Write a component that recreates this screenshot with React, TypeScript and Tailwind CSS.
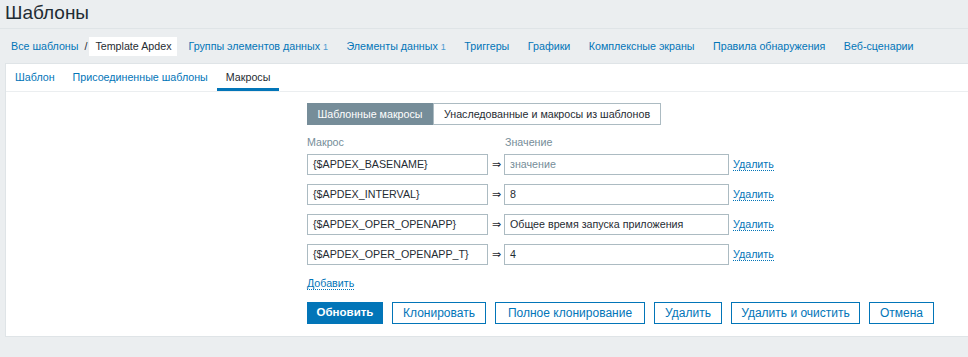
import React from 'react';

const navItems: { label: string; count?: number }[] = [
  { label: 'Группы элементов данных', count: 1 },
  { label: 'Элементы данных', count: 1 },
  { label: 'Триггеры' },
  { label: 'Графики' },
  { label: 'Комплексные экраны' },
  { label: 'Правила обнаружения' },
  { label: 'Веб-сценарии' },
];

const macros = [
  { name: '{$APDEX_BASENAME}', value: '', placeholder: 'значение' },
  { name: '{$APDEX_INTERVAL}', value: '8' },
  { name: '{$APDEX_OPER_OPENAPP}', value: 'Общее время запуска приложения' },
  { name: '{$APDEX_OPER_OPENAPP_T}', value: '4' },
];

const actions = [
  { label: 'Клонировать', w: 'w-[94px]' },
  { label: 'Полное клонирование', w: 'w-[150px]' },
  { label: 'Удалить', w: 'w-[68px]' },
  { label: 'Удалить и очистить', w: 'w-[129px]' },
  { label: 'Отмена', w: 'w-[65px]' },
];

export default function App() {
  return (
    <div className="min-h-[357px] bg-[#ebeef0] text-[10.7px] text-[#1f2c33] whitespace-nowrap font-['Liberation_Sans',Arial,sans-serif]">
      {/* Header */}
      <div className="h-[29px] border-b border-[#dfe4e7] px-[5px]">
        <h1 className="text-[19px] leading-[24px] pt-[1px] font-normal">Шаблоны</h1>
      </div>

      {/* Object navigation */}
      <div className="h-[34px] flex items-center pl-[11px] text-[#0275b8]">
        <span>Все шаблоны</span>
        <span className="ml-[6px] text-[#1f2c33]">/</span>
        <span className="ml-[2px] bg-white px-[6px] h-[19px] leading-[19px] text-[#1f2c33]">Template Apdex</span>
        <div className="flex ml-[11px] gap-[18.5px]">
          {navItems.map((item) => (
            <span key={item.label}>
              {item.label}
              {item.count !== undefined && (
                <span className="ml-[3px] text-[9px] text-[#4a9ad0]">{item.count}</span>
              )}
            </span>
          ))}
        </div>
      </div>

      {/* Panel */}
      <div className="ml-[5px] h-[274px] bg-white border-l border-b border-t border-[#dfe4e7]">
        {/* Tabs */}
        <div className="flex h-[28px] border-b border-[#ebeef0]">
          {['Шаблон', 'Присоединенные шаблоны', 'Макросы'].map((tab, i) => (
            <div
              key={tab}
              className={
                'px-[9px] h-[27px] leading-[26px] ' +
                (i === 2 ? 'text-[#1f2c33] border-b-[3px] border-[#0275b8]' : 'text-[#0275b8]')
              }
            >
              {tab}
            </div>
          ))}
        </div>

        <div className="pl-[301px] pt-[11px]">
          {/* Segmented */}
          <div className="flex h-[22px]">
            <div className="w-[126px] bg-[#768d99] text-white flex items-center justify-center">
              Шаблонные макросы
            </div>
            <div className="w-[228px] border border-[#acbbc2] flex items-center justify-center">
              Унаследованные и макросы из шаблонов
            </div>
          </div>

          {/* Table header */}
          <div className="flex mt-[9px] h-[16px] items-center text-[#768d99]">
            <span className="w-[198px]">Макрос</span>
            <span>Значение</span>
          </div>

          {/* Rows */}
          <div className="flex flex-col gap-[9px] mt-[4px]">
            {macros.map((m) => (
              <div key={m.name} className="flex items-center h-[21px]">
                <div className="w-[181px] h-[21px] border border-[#acbbc2] px-[5px] leading-[19px]">{m.name}</div>
                <span className="w-[16px] text-center text-[11px]">⇒</span>
                <div className={'w-[225px] h-[21px] border border-[#acbbc2] px-[5px] leading-[19px] ' + (m.value ? '' : 'text-[#768d99]')}>
                  {m.value || m.placeholder}
                </div>
                <span className="ml-[4px] text-[#0275b8] border-b border-dotted border-[#0275b8] leading-[12px]">Удалить</span>
              </div>
            ))}
          </div>

          <div className="mt-[10px] h-[14px]">
            <span className="text-[#0275b8] border-b border-dotted border-[#0275b8] leading-[12px] inline-block">Добавить</span>
          </div>

          {/* Buttons */}
          <div className="flex gap-[9px] mt-[13px]">
            <button className="w-[76px] h-[22px] bg-[#0275b8] text-white border border-[#0275b8] font-bold text-[11.5px]">
              Обновить
            </button>
            {actions.map((a) => (
              <button key={a.label} className={a.w + ' h-[22px] bg-white text-[#0275b8] border border-[#0275b8] text-[12px]'}>
                {a.label}
              </button>
            ))}
          </div>
        </div>
      </div>
    </div>
  );
}
